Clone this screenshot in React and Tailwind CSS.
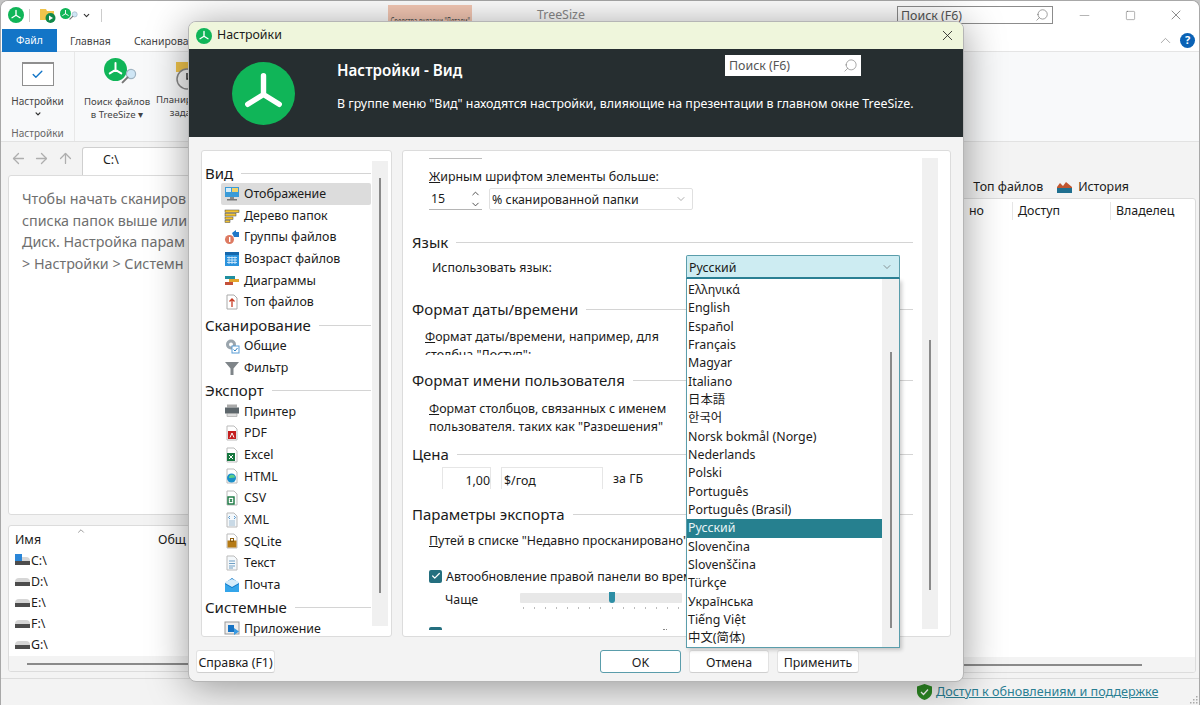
import React from 'react';
import { ChevronDown, ChevronUp, ArrowLeft, ArrowRight, ArrowUp, Search, Minus, Square, X, Check } from 'lucide-react';

const Logo = ({ size = 24 }) => (
    <svg width={size} height={size} viewBox="0 0 64 64" className="shrink-0">
        <circle cx="32" cy="32" r="32" fill="#10b558" />
        <path d="M32 14V33M32 33L16 43M32 33L48 43" stroke="#fff" strokeWidth="5.5" strokeLinecap="round" fill="none" />
    </svg>
);

const Glass = ({ size = 16, className = '' }) => (
    <svg width={size} height={size} viewBox="0 0 16 16" className={`shrink-0 ${className}`}>
        <circle cx="10" cy="6" r="4.6" fill="#cfe6f5" stroke="#9fb4c2" strokeWidth="1.2" />
        <path d="M6.6 9.4L1.6 14.4" stroke="#777" strokeWidth="2" strokeLinecap="round" />
    </svg>
);

const NavIcon = ({ name }) => {
    const icons = {
        display: (
            <>
                <rect x="1" y="1" width="14" height="10" fill="#3a9bd8" />
                <rect x="8" y="2" width="6" height="4" fill="#f2d36b" />
                <rect x="2" y="2" width="5" height="4" fill="#d8eef9" />
                <rect x="6" y="11" width="4" height="2" fill="#888" />
                <rect x="3" y="13" width="10" height="1.5" fill="#777" />
            </>
        ),
        tree: (
            <>
                <rect x="1" y="2" width="14" height="2.5" fill="#f4c430" stroke="#444" strokeWidth=".5" />
                <rect x="1" y="5.5" width="11" height="2.5" fill="#f4c430" stroke="#444" strokeWidth=".5" />
                <rect x="1" y="9" width="8" height="2.5" fill="#f4c430" stroke="#444" strokeWidth=".5" />
                <rect x="1" y="12.5" width="5" height="2" fill="#f4c430" stroke="#444" strokeWidth=".5" />
            </>
        ),
        groups: (
            <>
                <path d="M8 4L12 1V3H15V8H10Z" fill="#1f78c8" />
                <circle cx="5.5" cy="10.5" r="4.5" fill="#dd7a62" />
                <rect x="5" y="8" width="1.4" height="5" fill="#fff" />
            </>
        ),
        age: (
            <>
                <rect x="1" y="1" width="14" height="14" fill="#2b93dd" />
                <rect x="1" y="1" width="14" height="3" fill="#1668ad" />
                <path d="M3 6.5H13M3 9H13M3 11.5H13M5 5.5V13M8 5.5V13M11 5.5V13" stroke="#cfe8fa" strokeWidth=".9" />
            </>
        ),
        charts: (
            <>
                <rect x="1" y="3" width="10" height="3" fill="#1f8f9f" />
                <rect x="5" y="6" width="10" height="3" fill="#e4a52c" />
                <rect x="1" y="9" width="8" height="3" fill="#c4513a" />
            </>
        ),
        top: (
            <>
                <path d="M3 1H10L13 4V15H3Z" fill="#fff" stroke="#aaa" />
                <path d="M8 13V5M5.5 7.5L8 5L10.5 7.5" stroke="#c83a22" strokeWidth="1.3" fill="none" />
            </>
        ),
        general: (
            <>
                <circle cx="7" cy="6.5" r="5" fill="#9aa5ad" />
                <circle cx="7" cy="6.5" r="2" fill="#fff" />
                <rect x="8" y="8" width="7" height="7" fill="#fff" stroke="#5a9dd5" />
                <path d="M9.5 11.5L11 13L13.5 10" stroke="#2b7fc4" fill="none" />
            </>
        ),
        filter: <path d="M1 2H15L9.5 8.5V15H6.5V8.5Z" fill="#7f8589" />,
        printer: (
            <>
                <rect x="3" y="1.5" width="10" height="3" fill="#aaa" />
                <rect x="1" y="4.5" width="14" height="6" fill="#5d666b" />
                <rect x="3" y="10.5" width="10" height="3" fill="#ddd" stroke="#888" strokeWidth=".5" />
            </>
        ),
        pdf: (
            <>
                <path d="M3 1H10L13 4V15H3Z" fill="#fff" stroke="#bbb" />
                <rect x="4" y="6" width="8" height="8" fill="#c41e1e" />
                <path d="M6 12.5L8 8L10 12.5" stroke="#fff" fill="none" />
            </>
        ),
        excel: (
            <>
                <path d="M3 1H10L13 4V15H3Z" fill="#fff" stroke="#bbb" />
                <rect x="3" y="6" width="8" height="8" fill="#16773f" />
                <path d="M5 8L9 12M9 8L5 12" stroke="#fff" />
            </>
        ),
        html: (
            <>
                <path d="M3 1H10L13 4V15H3Z" fill="#fff" stroke="#bbb" />
                <circle cx="7.5" cy="10" r="4.5" fill="#1a8fc9" />
                <path d="M5 10A3 3 0 0 1 11 9.5L7 10Z" fill="#5ccf8a" />
            </>
        ),
        csv: (
            <>
                <path d="M3 1H10L13 4V15H3Z" fill="#fff" stroke="#bbb" />
                <rect x="4" y="7" width="6" height="7" fill="#fff" stroke="#16773f" strokeWidth="1.4" />
                <path d="M6 9L8 12M8 9L6 12" stroke="#16773f" />
            </>
        ),
        xml: (
            <>
                <path d="M3 1H10L13 4V15H3Z" fill="#f4f8fb" stroke="#bbb" />
                <path d="M6 4L4.5 5.5L6 7M10 4L11.5 5.5L10 7" stroke="#2b7fc4" fill="none" strokeWidth=".8" />
                <path d="M5 9H11M5 11H11M5 13H11" stroke="#9dbad0" />
            </>
        ),
        sqlite: (
            <>
                <path d="M3 1H10L13 4V15H3Z" fill="#fff" stroke="#bbb" />
                <rect x="3.5" y="7.5" width="9" height="7" fill="#b57a14" />
                <rect x="6.5" y="5.5" width="3" height="3" fill="none" stroke="#8b5c0d" />
            </>
        ),
        text: (
            <>
                <path d="M3 1H10L13 4V15H3Z" fill="#f4f8fb" stroke="#bbb" />
                <path d="M5 6H11M5 8.5H11M5 11H11M5 13H9" stroke="#6f9fc4" />
            </>
        ),
        mail: (
            <>
                <path d="M1 6L8 1L15 6V15H1Z" fill="#0f78c8" />
                <path d="M1 6L8 10L15 6V5L8 2L1 5Z" fill="#d5ecfa" />
                <path d="M1 7L8 11L15 7V15H1Z" fill="#34a5ea" />
            </>
        ),
        app: (
            <>
                <rect x="1" y="1" width="14" height="12" fill="#eee" stroke="#999" />
                <rect x="4" y="4" width="6" height="7" fill="#1673c4" />
                <path d="M10 7L15 10.5L10 14Z" fill="#3a9ae0" />
            </>
        ),
    };
    return (
        <svg width="16" height="16" viewBox="0 0 16 16" className="shrink-0">
            {icons[name]}
        </svg>
    );
};

const navGroups = [
    {
        title: 'Вид',
        items: [
            ['display', 'Отображение', true],
            ['tree', 'Дерево папок'],
            ['groups', 'Группы файлов'],
            ['age', 'Возраст файлов'],
            ['charts', 'Диаграммы'],
            ['top', 'Топ файлов'],
        ],
    },
    {
        title: 'Сканирование',
        items: [
            ['general', 'Общие'],
            ['filter', 'Фильтр'],
        ],
    },
    {
        title: 'Экспорт',
        items: [
            ['printer', 'Принтер'],
            ['pdf', 'PDF'],
            ['excel', 'Excel'],
            ['html', 'HTML'],
            ['csv', 'CSV'],
            ['xml', 'XML'],
            ['sqlite', 'SQLite'],
            ['text', 'Текст'],
            ['mail', 'Почта'],
        ],
    },
    { title: 'Системные', items: [['app', 'Приложение']] },
];

const languages = [
    'Ελληνικά',
    'English',
    'Español',
    'Français',
    'Magyar',
    'Italiano',
    '日本語',
    '한국어',
    'Norsk bokmål (Norge)',
    'Nederlands',
    'Polski',
    'Português',
    'Português (Brasil)',
    'Русский',
    'Slovenčina',
    'Slovenščina',
    'Türkçe',
    'Українська',
    'Tiếng Việt',
    '中文(简体)',
];

const SectionTitle = ({ children }) => (
    <div className="h-[22px] flex items-center gap-[8px] text-[15px] text-[#1b1b1b] whitespace-nowrap">
        {children}
        <div className="flex-1 h-px bg-[#d4d4d4]" />
    </div>
);

const DriveIcon = ({ system }) => (
    <span className="relative w-[15px] h-[12px] shrink-0">
        <span className="absolute left-0 right-0 top-[1px] h-[4px] bg-[#d6d6d6] rounded-t-full" />
        <span className="absolute left-0 right-0 top-[5px] h-[4px] bg-[#4d4d4d]" />
        {system && <span className="absolute left-0 top-[-2px] w-[7px] h-[7px] bg-[#2a86d8]" />}
    </span>
);

const DialogButton = ({ children, primary, className = '' }) => (
    <button
        className={`h-[23px] pt-[2px] bg-white rounded-[3px] border text-[12.4px] leading-[18px] text-[#1b1b1b] whitespace-nowrap ${
            primary ? 'border-[#5a9dab]' : 'border-[#e2e2e2] border-b-[#cfcfcf]'
        } ${className}`}
    >
        {children}
    </button>
);

const MainWindow = () => (
    <div className="w-[1200px] h-[705px] flex flex-col bg-[#f3f3f3] rounded-t-[8px] border-t border-x border-[#a8a8a8] overflow-hidden text-[12.4px] text-[#1b1b1b]">
        <div className="h-[28px] bg-white flex items-center shrink-0">
            <div className="w-[387px] flex items-center shrink-0">
                <div className="ml-[7px]">
                    <Logo size={16} />
                </div>
                <div className="w-px h-[13px] bg-[#ccc] ml-[5px]" />
                <svg width="16" height="16" viewBox="0 0 16 16" className="ml-[10px]">
                    <path d="M0 2H6L7 4H14V13H0Z" fill="#f0c44c" />
                    <circle cx="10.5" cy="11" r="5" fill="#10884a" />
                    <path d="M9 8.5L13 11L9 13.5Z" fill="#fff" />
                </svg>
                <div className="ml-[4px] flex items-center -mt-[4px]">
                    <Logo size={11} />
                    <Glass size={9} className="mt-[5px] -ml-[2px]" />
                </div>
                <ChevronDown size={9} strokeWidth={3} className="ml-[4px] text-[#333]" />
                <div className="w-px h-[13px] bg-[#ccc] ml-[10px]" />
            </div>
            <div className="w-[84px] h-[17px] -mt-[3px] bg-[#f6c9b5] text-[10px] leading-[12px] text-[#555] flex items-end justify-center overflow-hidden shrink-0">
                <span className="shrink-0 whitespace-nowrap scale-x-[0.6] translate-y-[5px]">Средства вкладки "Детали"</span>
            </div>
            <div className="w-[425px] pl-[65px] text-[#8a8a8a] shrink-0">TreeSize</div>
            <div className="w-[156px] h-[18px] bg-white border border-[#8c8c8c] flex items-center justify-between px-[3px] text-[#555] shrink-0">
                <span className="pt-[3px]">Поиск (F6)</span>
                <Search size={14} strokeWidth={1.2} className="-scale-x-100 text-[#777]" />
            </div>
            <Minus size={15} strokeWidth={1} className="ml-[24px] text-[#888]" />
            <Square size={11} strokeWidth={1} className="ml-[33px] text-[#555]" />
            <X size={16} strokeWidth={1} className="ml-[32px] text-[#555]" />
        </div>
        <div className="h-[23px] bg-white flex items-center shrink-0 border-b border-[#e5e5e5]">
            <div className="ml-[1px] w-[55px] h-[23px] pt-[2px] bg-[#1375c7] text-white text-[10.4px] flex items-center justify-center">Файл</div>
            <div className="ml-[13px] pt-[3px] text-[10.4px] text-[#444]">Главная</div>
            <div className="ml-[23px] pt-[3px] text-[10.4px] text-[#444] whitespace-nowrap">Сканирование</div>
            <ChevronUp size={17} strokeWidth={1} className="ml-auto text-[#888]" />
            <div className="ml-[6px] mr-[4px] w-[15px] h-[15px] rounded-full bg-[#0a62b5] text-white text-[11px] font-bold flex items-center justify-center">?</div>
        </div>
        <div className="h-[90px] bg-[#f8f9fa] flex shrink-0 border-b border-[#e2e2e2]">
            <div className="w-[74px] border-r border-[#e8e8e8] flex flex-col items-center text-[10px] text-[#444] pt-[10px]">
                <div className="w-[32px] h-[25px] bg-white border border-[#8f8f8f] border-t-2 flex items-center justify-center">
                    <Check size={13} strokeWidth={2.5} className="text-[#1375c7]" />
                </div>
                <div className="mt-[8px]">Настройки</div>
                <ChevronDown size={8} strokeWidth={4} className="mt-[1px] text-[#333]" />
                <div className="mt-[8px] text-[#666]">Настройки</div>
            </div>
            <div className="ml-[7px] w-[70px] flex flex-col items-center text-[9.6px] leading-[13px] text-[#444] pt-[6px] whitespace-nowrap">
                <div className="flex items-start h-[32px] ml-[6px]">
                    <Logo size={23} />
                    <Glass size={16} className="mt-[10px] -ml-[6px]" />
                </div>
                <div className="mt-[5px]">Поиск файлов</div>
                <div>в TreeSize ▾</div>
            </div>
            <div className="ml-[4px] flex flex-col items-center text-[9.6px] leading-[13px] text-[#444] pt-[9px] whitespace-nowrap">
                <svg width="30" height="30" viewBox="0 0 30 30">
                    <rect x="2" y="1" width="16" height="10" fill="#f0c44c" />
                    <circle cx="13" cy="18" r="10" fill="#f4f4f4" stroke="#888" strokeWidth="1.5" />
                    <path d="M13 12V18H18" stroke="#333" strokeWidth="1.5" fill="none" />
                </svg>
                <div className="mt-[2px]">Планировщик</div>
                <div>заданий</div>
            </div>
        </div>
        <div className="h-[33px] flex items-center shrink-0">
            <ArrowLeft size={17} strokeWidth={1.8} className="ml-[9px] text-[#aeaeae]" />
            <ArrowRight size={17} strokeWidth={1.8} className="ml-[6px] text-[#aeaeae]" />
            <ArrowUp size={17} strokeWidth={1.8} className="ml-[7px] text-[#aeaeae]" />
            <div className="ml-[8px] w-[300px] h-[28px] mt-[5px] bg-white border border-[#cfcfcf] border-b-0 rounded-t-[3px] pl-[20px] leading-[24px]">C:\</div>
        </div>
        <div className="flex-1 flex min-h-0">
            <div className="w-[190px] pl-[7px] flex flex-col shrink-0">
                <div className="h-[340px] bg-white border border-[#dcdcdc] rounded-[3px] pl-[13px] pt-[12px] text-[14.3px] leading-[21.5px] text-[#6f6f6f] whitespace-nowrap overflow-hidden">
                    <div>Чтобы начать сканиров</div>
                    <div>списка папок выше или</div>
                    <div>Диск. Настройка парам</div>
                    <div>&gt; Настройки &gt; Системн</div>
                </div>
                <div className="mt-[10px] h-[147px] bg-white border border-[#dcdcdc] rounded-[3px] flex flex-col overflow-hidden">
                    <div className="h-[28px] flex items-end relative">
                        <span className="pl-[6px]">Имя</span>
                        <ChevronUp size={10} className="absolute left-[67px] top-0 text-[#888]" />
                        <span className="absolute left-[149px] bottom-0">Общ</span>
                    </div>
                    <div className="flex-1 pt-[1px] pl-[6px]">
                        {['C:\\', 'D:\\', 'E:\\', 'F:\\', 'G:\\'].map((drive, i) => (
                            <div key={drive} className="h-[21px] flex items-center gap-[1px]">
                                <DriveIcon system={i === 0} />
                                {drive}
                            </div>
                        ))}
                    </div>
                    <div className="h-[15px] bg-[#f3f3f3] flex items-center pl-[18px] shrink-0">
                        <div className="w-full h-[2px] bg-[#8a8a8a]" />
                    </div>
                </div>
            </div>
            <div className="flex-1 flex flex-col min-w-0 pr-[3px]">
                <div className="h-[23px] pt-[1px] flex items-center justify-end pr-[67px] shrink-0">
                    <span className="mr-[14px]">Топ файлов</span>
                    <svg width="15" height="11" viewBox="0 0 15 11" className="mr-[6px]">
                        <path d="M0 5L3 1L6 4L9 0L15 5V11H0Z" fill="#c0562f" />
                        <rect x="0" y="6" width="15" height="5" fill="#1f6f8f" />
                    </svg>
                    <span>История</span>
                </div>
                <div className="ml-[10px] flex-1 bg-white border border-[#dcdcdc] rounded-[3px] flex flex-col overflow-hidden">
                    <div className="h-[24px] flex items-center justify-end pr-[1px] shrink-0">
                        <span className="w-[47px] pl-[4px]">но</span>
                        <span className="w-[98px] border-l border-[#e6e6e6] pl-[5px]">Доступ</span>
                        <span className="w-[84px] border-l border-[#e6e6e6] pl-[5px]">Владелец</span>
                    </div>
                    <div className="flex-1" />
                    <div className="h-[15px] bg-[#f3f3f3] flex items-center shrink-0">
                        <div className="w-[940px] h-[2px] bg-[#8a8a8a]" />
                    </div>
                </div>
            </div>
        </div>
        <div className="h-[27px] mt-[5px] border-t border-[#dcdcdc] flex items-center pl-[916px] relative shrink-0">
            <svg width="15" height="16" viewBox="0 0 15 16" className="shrink-0">
                <path d="M7.5 0L15 2.5V8C15 12 11 15 7.5 16C4 15 0 12 0 8V2.5Z" fill="#2e8b25" />
                <path d="M4 8L6.5 10.5L11 5.5" stroke="#fff" strokeWidth="1.3" fill="none" />
            </svg>
            <a className="ml-[4px] pt-[1px] text-[12.6px] text-[#2a7f93] underline whitespace-nowrap">Доступ к обновлениям и поддержке</a>
            <svg width="9" height="9" viewBox="0 0 9 9" className="absolute right-[1px] bottom-[1px]">
                <path d="M7 1H8.5V2.5H7ZM4 4H5.5V5.5H4ZM7 4H8.5V5.5H7ZM1 7H2.5V8.5H1ZM4 7H5.5V8.5H4ZM7 7H8.5V8.5H7Z" fill="#aaa" />
            </svg>
        </div>
    </div>
);

const SettingsPane = () => (
    <div className="flex-1 bg-white border border-[#dcdcdc] rounded-[3px] flex overflow-hidden">
        <div className="flex-1 pl-[9px] pr-[9px] mb-[6px] min-w-0 overflow-hidden">
            <div className="h-[80px] pl-[17px] pt-[7px]">
                <div className="w-[53px] h-px bg-[#bdbdbd]" />
                <div className="mt-[9px] leading-[18px]"><u>Ж</u>ирным шрифтом элементы больше:</div>
                <div className="flex gap-[7px] mt-[2px]">
                    <div className="w-[53px] h-[22px] bg-white border-b border-[#b5b5b5] flex items-center justify-between pl-[2px] pr-[1px]">
                        <span className="pt-[2px]">15</span>
                        <div className="flex flex-col">
                            <ChevronUp size={11} className="text-[#444]" />
                            <ChevronDown size={11} className="text-[#444]" />
                        </div>
                    </div>
                    <div className="w-[204px] h-[22px] border border-[#e0e0e0] rounded-[2px] flex items-center justify-between pl-[2px] pr-[5px]">
                        <span className="pt-[2px]">% сканированной папки</span>
                        <ChevronDown size={12} strokeWidth={1.2} className="text-[#777]" />
                    </div>
                </div>
            </div>
            <div className="h-[67px]">
                <SectionTitle>Язык</SectionTitle>
                <div className="mt-[4px] ml-[20px] leading-[22px]">Использовать язык:</div>
            </div>
            <div className="h-[71px]">
                <SectionTitle>Формат даты/времени</SectionTitle>
                <div className="mt-[8px] ml-[13px] w-[262px] h-[27px] overflow-hidden leading-[18px]">
                    <u>Ф</u>ормат даты/времени, например, для столбца "Доступ":
                </div>
            </div>
            <div className="h-[74px]">
                <SectionTitle>Формат имени пользователя</SectionTitle>
                <div className="mt-[9px] ml-[17px] w-[262px] h-[31px] overflow-hidden leading-[18px]">
                    <u>Ф</u>ормат столбцов, связанных с именем пользователя, таких как "Разрешения"
                </div>
            </div>
            <div className="h-[60px]">
                <SectionTitle>Цена</SectionTitle>
                <div className="mt-[2px] ml-[30px] flex items-center gap-[10px]">
                    <div className="w-[49px] h-[22px] border border-b-0 border-[#e6e6e6] text-right leading-[25px]">1,00</div>
                    <div className="w-[102px] h-[22px] border border-b-0 border-[#e6e6e6] pl-[2px] leading-[25px]">$/год</div>
                    <span className="pt-[2px]">за ГБ</span>
                </div>
            </div>
            <div>
                <SectionTitle>Параметры экспорта</SectionTitle>
                <div className="mt-[7px] ml-[17px] leading-[18px] whitespace-nowrap"><u>П</u>утей в списке "Недавно просканировано"</div>
                <div className="mt-[16px] ml-[17px] flex items-center gap-[4px] whitespace-nowrap">
                    <div className="w-[13px] h-[13px] bg-[#246f7f] rounded-[2px] flex items-center justify-center">
                        <Check size={10} strokeWidth={3} className="text-white" />
                    </div>
                    <span className="pt-[2px]">Автообновление правой панели во время сканирования</span>
                </div>
                <div className="mt-[4px] ml-[33px] flex items-center">
                    <span className="w-[75px]">Чаще</span>
                    <div className="relative w-[162px] h-[10px] bg-[#e8e8e8] rounded-[1px] -mt-[4px]">
                        <div className="absolute left-[89px] -top-[1px] w-[6px] h-[11px] bg-[#2d8ea5] rounded-b-[3px]" />
                        <div className="absolute left-[3px] right-[3px] top-[14px] flex justify-between">
                            {Array.from({ length: 15 }, (_, i) => (
                                <span key={i} className="w-px h-[2px] bg-[#bbb]" />
                            ))}
                        </div>
                    </div>
                </div>
                <div className="mt-[18px] ml-[17px] flex">
                    <div className="w-[13px] h-[13px] bg-[#246f7f] rounded-[2px]" />
                    <div className="ml-[221px] mt-[2px] w-[4px] h-px border-t border-dotted border-[#888]" />
                </div>
            </div>
        </div>
        <div className="w-[16px] my-[7px] mr-[12px] bg-[#f0f0f0] flex justify-center shrink-0">
            <div className="w-[2px] h-[250px] mt-[182px] bg-[#8a8a8a]" />
        </div>
    </div>
);

const LanguageDropdown = () => (
    <div className="absolute left-[497px] top-[233px] w-[214px]">
        <div className="h-[24px] bg-[#cdecf2] border border-[#5a9dab] border-b-2 border-b-[#2b8296] rounded-t-[2px] flex items-center justify-between pl-[2px] pr-[6px]">
            <span className="pt-[3px]">Русский</span>
            <ChevronDown size={12} strokeWidth={1.2} className="text-[#555]" />
        </div>
        <div className="h-[369px] bg-white border-x border-b border-[#5a9dab] flex shadow-[2px_2px_4px_rgba(0,0,0,0.2)]">
            <div className="flex-1 min-w-0 pt-[2px] overflow-hidden">
                {languages.map((lang) => (
                    <div
                        key={lang}
                        className={`h-[18.33px] leading-[18px] pl-[1px] whitespace-nowrap ${lang === 'Русский' ? 'bg-[#26808f] text-[#e6f4f6]' : ''}`}
                    >
                        {lang}
                    </div>
                ))}
            </div>
            <div className="w-[17px] bg-[#f0f0f0] flex justify-center shrink-0">
                <div className="w-[2px] h-[276px] mt-[73px] bg-[#8a8a8a]" />
            </div>
        </div>
    </div>
);

const SettingsDialog = () => (
    <div className="absolute left-[188px] top-[21px] w-[776px] h-[661px] bg-[#f3f3f3] rounded-[8px] border border-[#b5b5b5] shadow-[0_4px_40px_rgba(0,0,0,0.4)] flex flex-col overflow-hidden text-[12.4px] text-[#1b1b1b]">
        <div className="h-[27px] bg-[#eff6dc] flex items-center pl-[7px] shrink-0">
            <Logo size={16} />
            <span className="ml-[5px]">Настройки</span>
            <X size={17} strokeWidth={1.2} className="ml-auto mr-[7px] text-[#222]" />
        </div>
        <div className="h-[88px] bg-[#262e30] flex items-center pl-[43px] text-white shrink-0">
            <Logo size={63} />
            <div className="ml-[42px] flex-1 h-full pt-[6px]">
                <div className="flex">
                    <div className="w-[388px] pt-[5px] text-[15.2px] font-semibold leading-[20px]">Настройки - Вид</div>
                    <div className="w-[136px] h-[21px] bg-white text-[#555] flex items-center justify-between pl-[4px] pr-[3px]">
                        <span className="pt-[2px]">Поиск (F6)</span>
                        <Search size={15} strokeWidth={1} className="-scale-x-100 text-[#777]" />
                    </div>
                </div>
                <div className="mt-[15px] leading-[18px] whitespace-nowrap">
                    В группе меню "Вид" находятся настройки, влияющие на презентации в главном окне TreeSize.
                </div>
            </div>
        </div>
        <div className="h-[487px] mt-[13px] px-[12px] flex gap-[10px] shrink-0">
            <div className="w-[191px] bg-white border border-[#dcdcdc] rounded-[3px] flex overflow-hidden">
                <div className="flex-1 min-w-0 pl-[3px] pt-[12px] overflow-hidden">
                    {navGroups.map((group, g) => (
                        <div key={group.title}>
                            <div className={`h-[20px] flex items-center gap-[8px] text-[15px] whitespace-nowrap ${g > 0 ? 'mt-[2px]' : ''}`}>
                                {group.title}
                                <div className="flex-1 h-px bg-[#d4d4d4]" />
                            </div>
                            {group.items.map(([icon, label, active]) => (
                                <div
                                    key={label}
                                    className={`ml-[16px] h-[21.7px] pl-[3px] flex items-center gap-[4px] rounded-[2px] ${active ? 'bg-[#dcdcdc]' : ''}`}
                                >
                                    <NavIcon name={icon} />
                                    <span className="pt-[1px]">{label}</span>
                                </div>
                            ))}
                        </div>
                    ))}
                </div>
                <div className="w-[16px] my-[10px] ml-[1px] mr-[3px] bg-[#f0f0f0] flex justify-center shrink-0">
                    <div className="w-[2px] h-[415px] mt-[17px] bg-[#8a8a8a]" />
                </div>
            </div>
            <SettingsPane />
        </div>
        <div className="mt-[13px] pl-[7px] flex shrink-0">
            <DialogButton className="w-[79px]">Справка (F1)</DialogButton>
            <div className="ml-auto mr-[104px] flex gap-[8px]">
                <DialogButton primary className="w-[81px]">OK</DialogButton>
                <DialogButton className="w-[80px]">Отмена</DialogButton>
                <DialogButton className="w-[82px]">Применить</DialogButton>
            </div>
        </div>
        <LanguageDropdown />
    </div>
);

const App = () => (
    <div
        className="relative w-[1200px] h-[705px] overflow-hidden bg-[#c4c4c4]"
        style={{ fontFamily: '"Noto Sans", "Noto Sans CJK JP", "Noto Sans CJK KR", "Noto Sans CJK SC", sans-serif' }}
    >
        <MainWindow />
        <SettingsDialog />
    </div>
);

export default App;
